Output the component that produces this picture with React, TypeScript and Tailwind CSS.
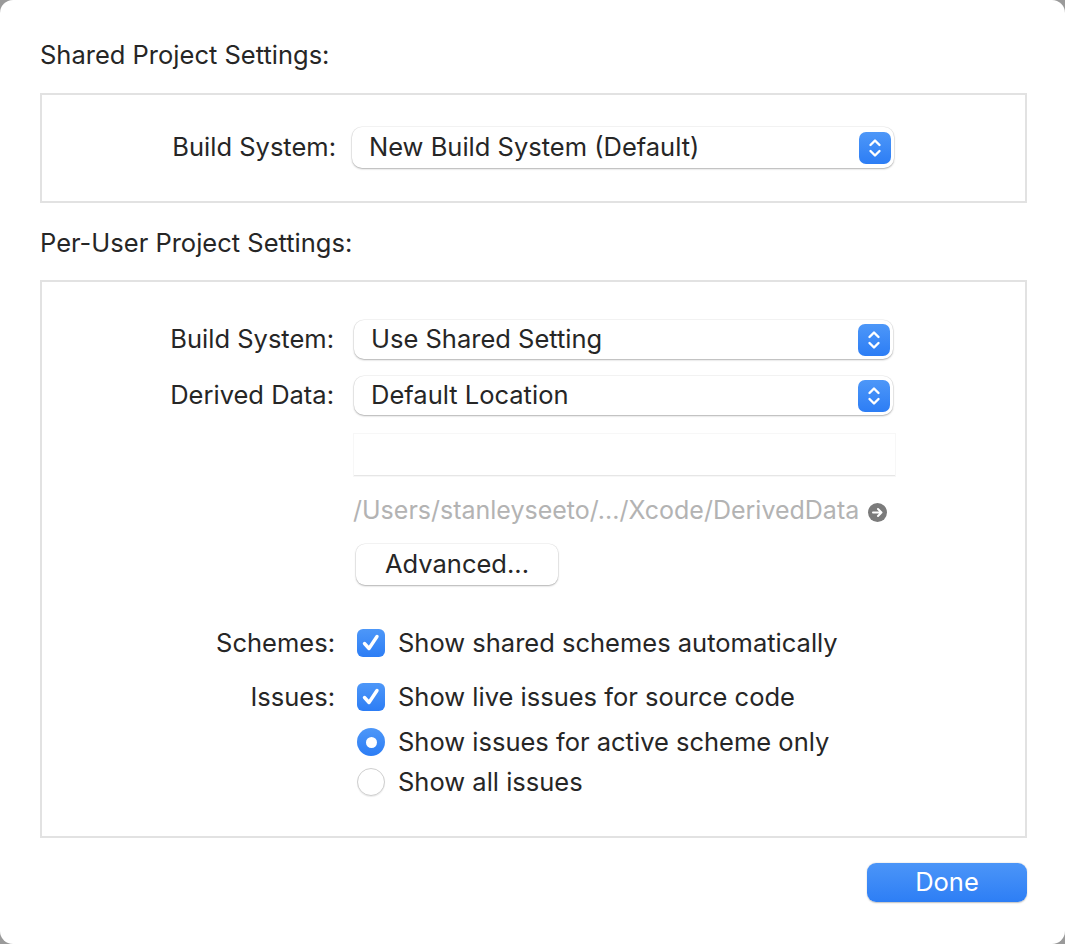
import React from 'react';

const font = { fontFamily: 'Inter, "Noto Sans", sans-serif' };

function Stepper() {
  return (
    <span className="flex h-[32px] w-[32px] items-center justify-center rounded-[7px] bg-gradient-to-b from-[#4d97f8] to-[#2c7df5]">
      <svg width="14" height="22" viewBox="0 0 14 22" fill="none">
        <path d="M2.5 8 L7 3.5 L11.5 8" stroke="white" strokeWidth="2.4" strokeLinecap="round" strokeLinejoin="round" />
        <path d="M2.5 14 L7 18.5 L11.5 14" stroke="white" strokeWidth="2.4" strokeLinecap="round" strokeLinejoin="round" />
      </svg>
    </span>
  );
}

function PopUp({ value, wide = false }: { value: string; wide?: boolean }) {
  return (
    <div
      className={`flex items-center justify-between rounded-[10px] bg-white pl-[17px] pr-[3px] shadow-[0_1px_2px_rgba(0,0,0,0.28),0_0_0_0.5px_rgba(0,0,0,0.08)] ${
        wide ? 'h-[41px] w-[542px]' : 'h-[39px] w-[539px]'
      }`}
    >
      <span className="text-[25.5px] text-[#262626]">{value}</span>
      <Stepper />
    </div>
  );
}

function Checkbox() {
  return (
    <span className="flex h-[28px] w-[28px] shrink-0 items-center justify-center rounded-[6px] bg-gradient-to-b from-[#4d97f8] to-[#2c7df5]">
      <svg width="20" height="20" viewBox="0 0 20 20" fill="none">
        <path d="M3.5 10.5 L8 15.5 L16 3.5" stroke="white" strokeWidth="3.4" strokeLinecap="round" strokeLinejoin="round" />
      </svg>
    </span>
  );
}

function Radio({ checked }: { checked: boolean }) {
  if (checked) {
    return (
      <span className="flex h-[28px] w-[28px] shrink-0 items-center justify-center rounded-full bg-gradient-to-b from-[#4d97f8] to-[#2c7df5]">
        <span className="h-[11px] w-[11px] rounded-full bg-white" />
      </span>
    );
  }
  return (
    <span className="h-[28px] w-[28px] shrink-0 rounded-full border border-[#cfcfcf] bg-white shadow-[0_1px_1px_rgba(0,0,0,0.08)]" />
  );
}

function Option({ children, control }: { children: React.ReactNode; control: React.ReactNode }) {
  return (
    <div className="ml-[3px] flex h-[28px] items-center gap-[13px]">
      {control}
      <span className="text-[25.5px] text-[#262626]">{children}</span>
    </div>
  );
}

export default function App() {
  return (
    <div className="h-[944px] w-[1065px] bg-[#9a9a9a]" style={font}>
      <div className="flex h-full flex-col rounded-[13px] bg-white pl-[40px] pr-[38px] text-[#262626]">
        <h1 className="mt-[35px] flex h-[40px] items-center text-[25.5px] font-normal">Shared Project Settings:</h1>

        <section className="mt-[18px] h-[110px] border-2 border-[#e2e2e2] pt-[32px]">
          <div className="flex items-center gap-[16px]">
            <span className="w-[294px] text-right text-[25.5px]">Build System:</span>
            <PopUp value="New Build System (Default)" wide />
          </div>
        </section>

        <h2 className="mt-[20px] flex h-[40px] items-center text-[25.5px] font-normal">Per-User Project Settings:</h2>

        <section className="mt-[17px] h-[558px] border-2 border-[#e2e2e2] pt-[38px]">
          <div className="grid grid-cols-[292px_1fr] items-center gap-x-[20px] gap-y-[17px]">
            <span className="text-right text-[25.5px]">Build System:</span>
            <PopUp value="Use Shared Setting" />
            <span className="text-right text-[25.5px]">Derived Data:</span>
            <PopUp value="Default Location" />
          </div>

          <div className="ml-[312px] flex flex-col">
            <div className="mt-[19px] h-[42px] w-[541px] border-b border-[#e6e6e6] bg-white shadow-[0_0_0_1px_rgba(0,0,0,0.03)]" />
            <div className="mt-[19px] flex h-[32px] items-center gap-[9px]">
              <span className="-ml-[1px] text-[25px] text-[#b3b3b3]">/Users/stanleyseeto/.../Xcode/DerivedData</span>
              <svg width="19" height="19" viewBox="0 0 19 19" className="mt-[3px]">
                <circle cx="9.5" cy="9.5" r="9.5" fill="#7b7b7b" />
                <path d="M5 9.5 H13.5 M10 6 L13.5 9.5 L10 13" stroke="white" strokeWidth="2" fill="none" strokeLinecap="round" strokeLinejoin="round" />
              </svg>
            </div>
            <button className="mt-[17px] ml-[2px] flex h-[41px] w-[202px] items-center justify-center rounded-[9px] bg-white text-[25.5px] text-[#262626] shadow-[0_1px_2px_rgba(0,0,0,0.28),0_0_0_0.5px_rgba(0,0,0,0.08)]">
              Advanced...
            </button>
          </div>

          <div className="mt-[44px] grid grid-cols-[293px_1fr] gap-x-[19px]">
            <span className="flex h-[28px] items-center justify-end text-[25.5px]">Schemes:</span>
            <Option control={<Checkbox />}>Show shared schemes automatically</Option>

            <span className="mt-[26px] flex h-[28px] items-center justify-end text-[25.5px]">Issues:</span>
            <div className="mt-[26px] flex flex-col">
              <Option control={<Checkbox />}>Show live issues for source code</Option>
              <div className="mt-[17px]">
                <Option control={<Radio checked />}>Show issues for active scheme only</Option>
              </div>
              <div className="mt-[12px]">
                <Option control={<Radio checked={false} />}>Show all issues</Option>
              </div>
            </div>
          </div>
        </section>

        <div className="mt-[25px] flex justify-end">
          <button className="flex h-[39px] w-[160px] items-center justify-center rounded-[9px] bg-gradient-to-b from-[#4b95f8] to-[#2d7ef5] text-[25.5px] text-white shadow-[0_0.5px_1.5px_rgba(0,0,0,0.25)]">
            Done
          </button>
        </div>
      </div>
    </div>
  );
}
